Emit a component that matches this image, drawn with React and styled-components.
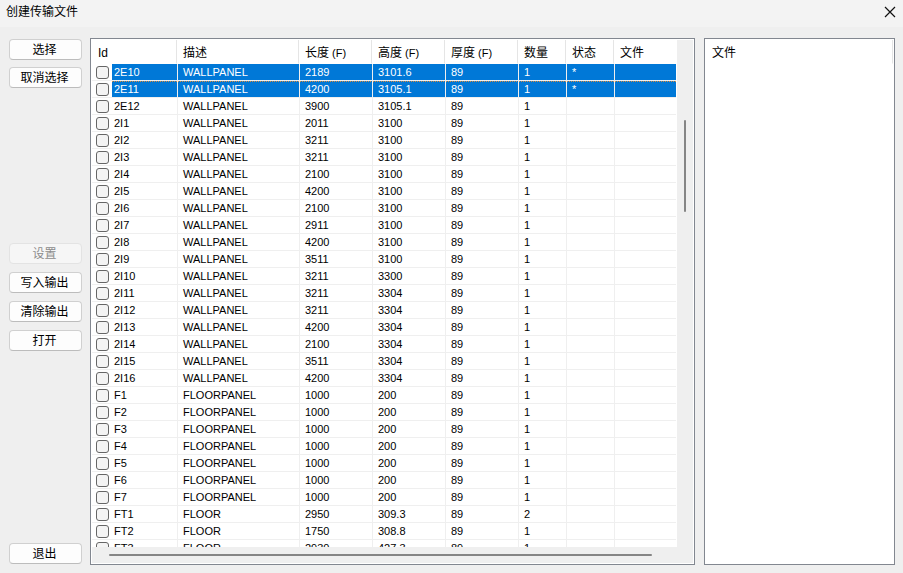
import React, { useState } from 'react';
import styled, { createGlobalStyle, css } from 'styled-components';

const GlobalStyle = createGlobalStyle`
  * {
    box-sizing: border-box;
  }
  body {
    margin: 0;
    background: #efefef;
    color: #000;
    font-family: 'Liberation Sans', 'Noto Sans CJK SC', sans-serif;
    font-size: 12px;
  }
`;

const Dialog = styled.div`
  display: flex;
  flex-direction: column;
  height: 100vh;
`;

const TitleBar = styled.header`
  display: flex;
  flex: none;
  align-items: center;
  justify-content: space-between;
  height: 27px;
  padding: 0 6px 4px;
  background: #f3f3f3;
`;

const Title = styled.h1`
  margin: 0;
  font-size: 12px;
  font-weight: 400;
  line-height: 16px;
`;

const CloseButton = styled.button`
  display: flex;
  align-items: center;
  justify-content: center;
  width: 14px;
  height: 22px;
  padding: 0;
  border: 0;
  background: transparent;
`;

const Content = styled.main`
  display: flex;
  flex: 1;
  min-height: 0;
  padding: 11px 8px 8px 9px;
`;

const Sidebar = styled.nav`
  display: flex;
  flex: none;
  flex-direction: column;
  width: 73px;
  margin-right: 8px;
  padding: 1px 0;
`;

const ButtonGroup = styled.div`
  display: flex;
  flex-direction: column;
  gap: ${props => props.$gap || 8}px;
`;

const Spacer = styled.div`
  flex: ${props => props.$grow} 1 0;
`;

const Button = styled.button`
  height: 21px;
  padding: 2px 2px 0 0;
  border: 1px solid #d0d0d0;
  border-bottom-color: #bcbcbc;
  border-radius: 4px;
  background: #fdfdfd;
  color: #000;
  font-family: inherit;
  font-size: 12px;
  line-height: 17px;
  &:disabled {
    border-color: #e3e3e3;
    background: #f6f6f6;
    color: #8c8c8c;
  }
`;

const Frame = styled.section`
  flex: ${props => props.$grow} 1 0;
  min-width: 0;
  padding: 1px;
  border: 1px solid #828790;
  background: #fff;
`;

const ListFrame = styled(Frame)`
  display: grid;
  grid-template-columns: minmax(0, 1fr) 16px;
  grid-template-rows: minmax(0, 1fr) 16px;
  margin-right: 9px;
`;

const Viewport = styled.div`
  overflow: hidden;
  padding-right: 1px;
`;

const ScrollTrack = styled.div`
  display: flex;
  background: #efefef;
  ${props => props.$vertical ? css`
    flex-direction: column;
    padding: 80px 7px 0;
  ` : css`
    grid-column: 1 / -1;
    padding: 7px 41px 7px 17px;
  `}
`;

const ScrollThumb = styled.div`
  border-radius: 1px;
  background: #858585;
  ${props => props.$vertical ? css`
    height: 92px;
  ` : css`
    flex: 1;
  `}
`;

const Table = styled.table`
  width: 100%;
  table-layout: fixed;
  border-collapse: separate;
  border-spacing: 0;
`;

const Col = styled.col`
  width: ${props => props.$width ? `${props.$width}px` : 'auto'};
`;

const HeadCell = styled.th`
  height: 24px;
  padding: 2px 0 0 6px;
  border-right: 1px solid #e5e5e5;
  border-bottom: 1px solid #fff;
  font-size: 12px;
  font-weight: 400;
  line-height: 20px;
  text-align: left;
  white-space: nowrap;
  ${props => props.$open && css`
    border-right: 0;
  `}
`;

const Unit = styled.span`
  font-size: 11px;
`;

const Cell = styled.td`
  height: 17px;
  padding: 1px 0 0 5px;
  border-bottom: 1px solid #efefef;
  border-left: 1px solid #efefef;
  font-size: 11px;
  line-height: 15px;
  white-space: nowrap;
`;

const IdCell = styled(Cell)`
  padding: 0 0 0 4px;
  border-left: 0;
`;

const IdLabel = styled.label`
  display: flex;
  align-items: center;
  gap: 3px;
  height: 16px;
`;

const IdText = styled.span`
  flex: 1;
  height: 16px;
  padding: 1px 0 0 2px;
`;

const CheckBox = styled.input`
  appearance: none;
  flex: none;
  width: 13px;
  height: 13px;
  margin: 1px 0 0;
  border: 1px solid #666;
  border-radius: 3px;
  background: #f4f4f4;
  &:checked {
    background: #0078d7;
  }
`;

const Row = styled.tr`
  ${props => props.$selected && css`
    color: #fff;
    ${Cell}:not(:first-child), ${IdText} {
      background: #0078d7;
    }
  `}
  ${props => props.$focused && css`
    ${Cell}:not(:first-child), ${IdText} {
      background: repeating-linear-gradient(90deg, #d98a3c 0 1px, #0078d7 1px 2px) top / 100% 1px no-repeat #0078d7;
    }
  `}
`;

const columns = [
  { title: 'Id', width: 85 },
  { title: '描述', width: 122 },
  { title: '长度', unit: '(F)', width: 73 },
  { title: '高度', unit: '(F)', width: 73 },
  { title: '厚度', unit: '(F)', width: 73 },
  { title: '数量', width: 48 },
  { title: '状态', width: 48 },
  { title: '文件' },
];

const items = [
  ['2E10', 'WALLPANEL', '2189', '3101.6', '89', '1', '*'],
  ['2E11', 'WALLPANEL', '4200', '3105.1', '89', '1', '*'],
  ['2E12', 'WALLPANEL', '3900', '3105.1', '89', '1'],
  ['2I1', 'WALLPANEL', '2011', '3100', '89', '1'],
  ['2I2', 'WALLPANEL', '3211', '3100', '89', '1'],
  ['2I3', 'WALLPANEL', '3211', '3100', '89', '1'],
  ['2I4', 'WALLPANEL', '2100', '3100', '89', '1'],
  ['2I5', 'WALLPANEL', '4200', '3100', '89', '1'],
  ['2I6', 'WALLPANEL', '2100', '3100', '89', '1'],
  ['2I7', 'WALLPANEL', '2911', '3100', '89', '1'],
  ['2I8', 'WALLPANEL', '4200', '3100', '89', '1'],
  ['2I9', 'WALLPANEL', '3511', '3100', '89', '1'],
  ['2I10', 'WALLPANEL', '3211', '3300', '89', '1'],
  ['2I11', 'WALLPANEL', '3211', '3304', '89', '1'],
  ['2I12', 'WALLPANEL', '3211', '3304', '89', '1'],
  ['2I13', 'WALLPANEL', '4200', '3304', '89', '1'],
  ['2I14', 'WALLPANEL', '2100', '3304', '89', '1'],
  ['2I15', 'WALLPANEL', '3511', '3304', '89', '1'],
  ['2I16', 'WALLPANEL', '4200', '3304', '89', '1'],
  ['F1', 'FLOORPANEL', '1000', '200', '89', '1'],
  ['F2', 'FLOORPANEL', '1000', '200', '89', '1'],
  ['F3', 'FLOORPANEL', '1000', '200', '89', '1'],
  ['F4', 'FLOORPANEL', '1000', '200', '89', '1'],
  ['F5', 'FLOORPANEL', '1000', '200', '89', '1'],
  ['F6', 'FLOORPANEL', '1000', '200', '89', '1'],
  ['F7', 'FLOORPANEL', '1000', '200', '89', '1'],
  ['FT1', 'FLOOR', '2950', '309.3', '89', '2'],
  ['FT2', 'FLOOR', '1750', '308.8', '89', '1'],
  ['FT3', 'FLOOR', '2930', '427.3', '89', '1'],
];

const ItemRow = ({ item, selected, focused, onSelect }) => {
  const [id, ...values] = item;
  const [checked, setChecked] = useState(false);
  return (
    <Row $selected={selected} $focused={focused} onClick={onSelect}>
      <IdCell>
        <IdLabel>
          <CheckBox type="checkbox" checked={checked} onChange={() => setChecked(!checked)} />
          <IdText>{id}</IdText>
        </IdLabel>
      </IdCell>
      {columns.slice(1).map((column, i) => <Cell key={column.title}>{values[i]}</Cell>)}
    </Row>
  );
};

const App = () => {
  const [selected, setSelected] = useState(['2E10', '2E11']);
  const [focused, setFocused] = useState('2E11');

  const select = id => {
    setSelected([id]);
    setFocused(id);
  };

  return (
    <Dialog>
      <GlobalStyle />
      <TitleBar>
        <Title>创建传输文件</Title>
        <CloseButton aria-label="关闭">
          <svg width="12" height="12" viewBox="0 0 12 12" stroke="#111" strokeWidth="1.2">
            <path d="M1 1l10 10M11 1L1 11" />
          </svg>
        </CloseButton>
      </TitleBar>
      <Content>
        <Sidebar>
          <ButtonGroup $gap={7}>
            <Button>选择</Button>
            <Button>取消选择</Button>
          </ButtonGroup>
          <Spacer $grow={155} />
          <ButtonGroup>
            <Button disabled>设置</Button>
            <Button>写入输出</Button>
            <Button>清除输出</Button>
            <Button>打开</Button>
          </ButtonGroup>
          <Spacer $grow={192} />
          <Button>退出</Button>
        </Sidebar>
        <ListFrame $grow={601}>
          <Viewport>
            <Table>
              <colgroup>
                {columns.map(column => <Col key={column.title} $width={column.width} />)}
              </colgroup>
              <thead>
                <tr>
                  {columns.map(column => (
                    <HeadCell key={column.title} $open={!column.width}>
                      {column.title}
                      {column.unit && <Unit> {column.unit}</Unit>}
                    </HeadCell>
                  ))}
                </tr>
              </thead>
              <tbody>
                {items.map(item => (
                  <ItemRow
                    key={item[0]}
                    item={item}
                    selected={selected.includes(item[0])}
                    focused={focused === item[0]}
                    onSelect={() => select(item[0])}
                  />
                ))}
              </tbody>
            </Table>
          </Viewport>
          <ScrollTrack $vertical><ScrollThumb $vertical /></ScrollTrack>
          <ScrollTrack><ScrollThumb /></ScrollTrack>
        </ListFrame>
        <Frame $grow={187}>
          <Table>
            <thead>
              <tr>
                <HeadCell>文件</HeadCell>
              </tr>
            </thead>
          </Table>
        </Frame>
      </Content>
    </Dialog>
  );
};

export default App;
